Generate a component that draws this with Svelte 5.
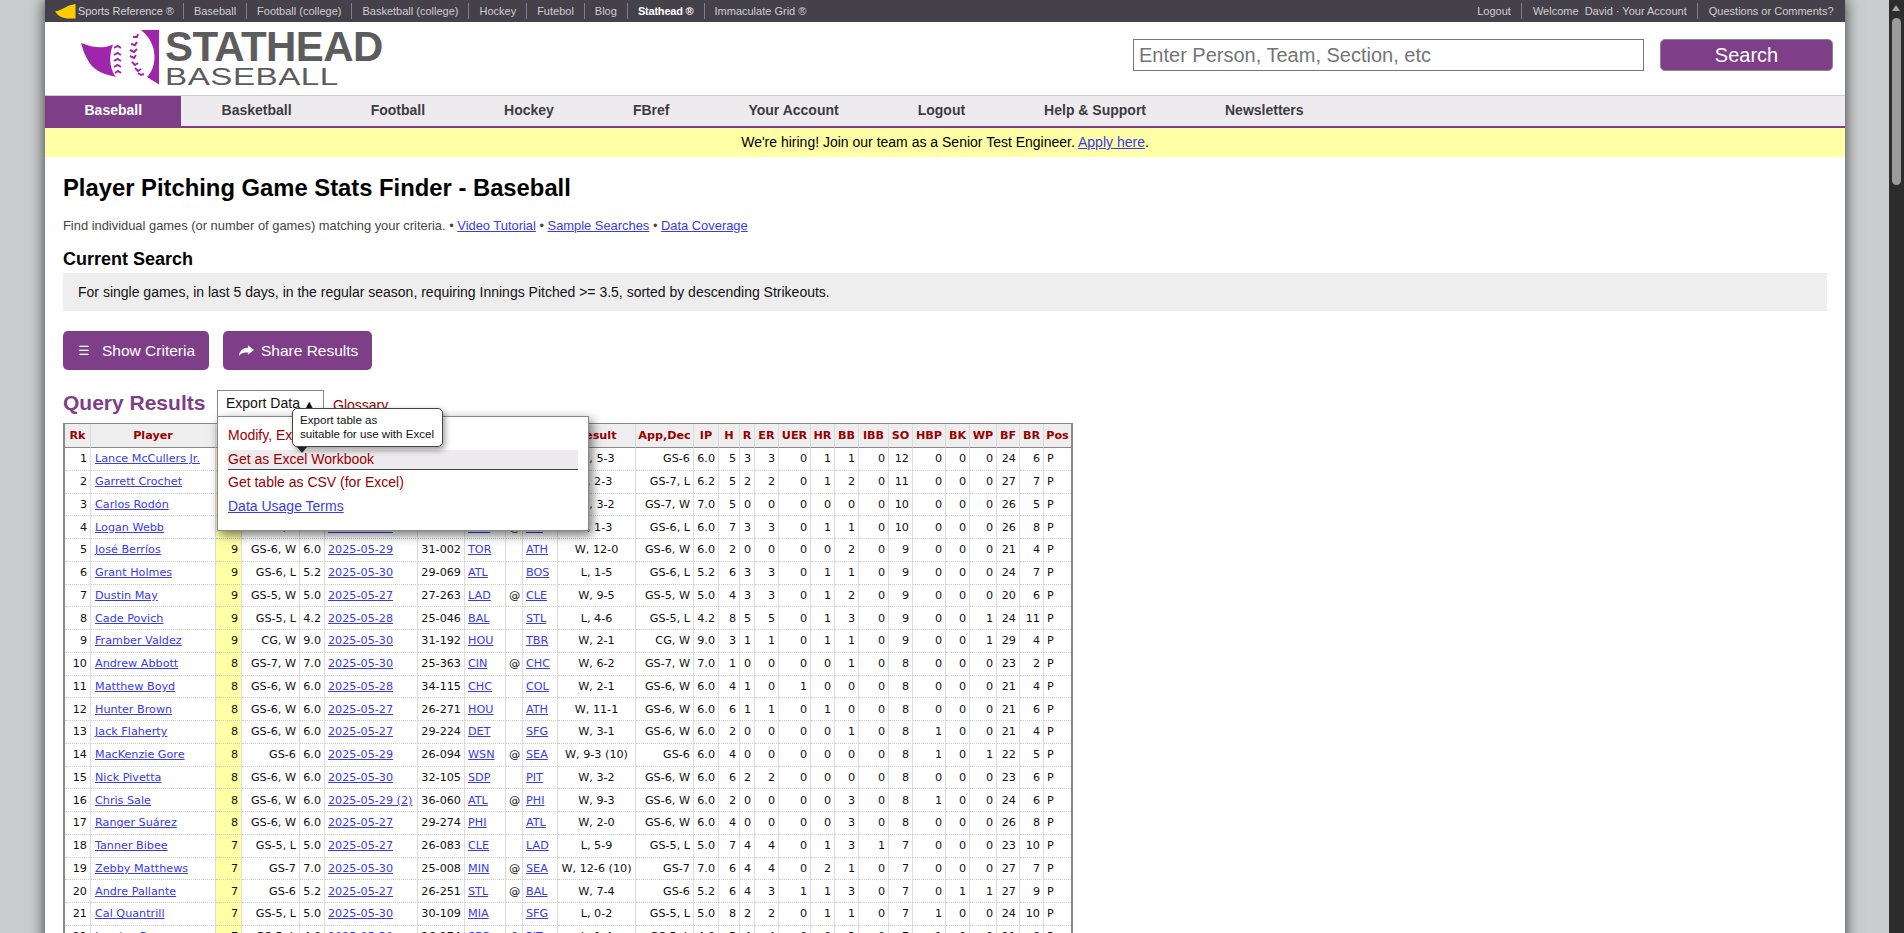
<script>
  const topLeft = ['Baseball', 'Football (college)', 'Basketball (college)', 'Hockey', 'Futebol', 'Blog'];
  const topRight = ['Logout', 'Welcome  David · Your Account', 'Questions or Comments?'];
  const nav = ['Baseball', 'Basketball', 'Football', 'Hockey', 'FBref', 'Your Account', 'Logout', 'Help & Support', 'Newsletters'];

  const heads = ['Rk', 'Player', 'SO', 'App,Dec', 'IP', 'Date', 'Age', 'Team', '', 'Opp', 'Result', 'App,Dec', 'IP', 'H', 'R', 'ER', 'UER', 'HR', 'BB', 'IBB', 'SO', 'HBP', 'BK', 'WP', 'BF', 'BR', 'Pos'];
  const widths = [26, 125, 26, 58, 25, 93, 47, 41, 17, 35, 78, 58, 25, 21, 15, 24, 32, 24, 24, 30, 24, 33, 24, 27, 23, 24, 27];

  // name, app, ip, date, age, team, at, opp, result, then H R ER UER HR BB IBB SO HBP BK WP BF BR
  const rows = [
    ['Lance McCullers Jr.', 'GS-6', '6.0', '2025-05-29', '31-229', 'HOU', '', 'CHW', 'W, 5-3', 5, 3, 3, 0, 1, 1, 0, 12, 0, 0, 0, 24, 6],
    ['Garrett Crochet', 'GS-7, L', '6.2', '2025-05-30', '25-362', 'BOS', '', 'ATL', 'L, 2-3', 5, 2, 2, 0, 1, 2, 0, 11, 0, 0, 0, 27, 7],
    ['Carlos Rodón', 'GS-7, W', '7.0', '2025-05-30', '32-170', 'NYY', '', 'COL', 'W, 3-2', 5, 0, 0, 0, 0, 0, 0, 10, 0, 0, 0, 26, 5],
    ['Logan Webb', 'GS-6, L', '6.0', '2025-05-30', '28-187', 'SFG', '@', 'PIT', 'L, 1-3', 7, 3, 3, 0, 1, 1, 0, 10, 0, 0, 0, 26, 8],
    ['José Berríos', 'GS-6, W', '6.0', '2025-05-29', '31-002', 'TOR', '', 'ATH', 'W, 12-0', 2, 0, 0, 0, 0, 2, 0, 9, 0, 0, 0, 21, 4],
    ['Grant Holmes', 'GS-6, L', '5.2', '2025-05-30', '29-069', 'ATL', '', 'BOS', 'L, 1-5', 6, 3, 3, 0, 1, 1, 0, 9, 0, 0, 0, 24, 7],
    ['Dustin May', 'GS-5, W', '5.0', '2025-05-27', '27-263', 'LAD', '@', 'CLE', 'W, 9-5', 4, 3, 3, 0, 1, 2, 0, 9, 0, 0, 0, 20, 6],
    ['Cade Povich', 'GS-5, L', '4.2', '2025-05-28', '25-046', 'BAL', '', 'STL', 'L, 4-6', 8, 5, 5, 0, 1, 3, 0, 9, 0, 0, 1, 24, 11],
    ['Framber Valdez', 'CG, W', '9.0', '2025-05-30', '31-192', 'HOU', '', 'TBR', 'W, 2-1', 3, 1, 1, 0, 1, 1, 0, 9, 0, 0, 1, 29, 4],
    ['Andrew Abbott', 'GS-7, W', '7.0', '2025-05-30', '25-363', 'CIN', '@', 'CHC', 'W, 6-2', 1, 0, 0, 0, 0, 1, 0, 8, 0, 0, 0, 23, 2],
    ['Matthew Boyd', 'GS-6, W', '6.0', '2025-05-28', '34-115', 'CHC', '', 'COL', 'W, 2-1', 4, 1, 0, 1, 0, 0, 0, 8, 0, 0, 0, 21, 4],
    ['Hunter Brown', 'GS-6, W', '6.0', '2025-05-27', '26-271', 'HOU', '', 'ATH', 'W, 11-1', 6, 1, 1, 0, 1, 0, 0, 8, 0, 0, 0, 21, 6],
    ['Jack Flaherty', 'GS-6, W', '6.0', '2025-05-27', '29-224', 'DET', '', 'SFG', 'W, 3-1', 2, 0, 0, 0, 0, 1, 0, 8, 1, 0, 0, 21, 4],
    ['MacKenzie Gore', 'GS-6', '6.0', '2025-05-29', '26-094', 'WSN', '@', 'SEA', 'W, 9-3 (10)', 4, 0, 0, 0, 0, 0, 0, 8, 1, 0, 1, 22, 5],
    ['Nick Pivetta', 'GS-6, W', '6.0', '2025-05-30', '32-105', 'SDP', '', 'PIT', 'W, 3-2', 6, 2, 2, 0, 0, 0, 0, 8, 0, 0, 0, 23, 6],
    ['Chris Sale', 'GS-6, W', '6.0', '2025-05-29 (2)', '36-060', 'ATL', '@', 'PHI', 'W, 9-3', 2, 0, 0, 0, 0, 3, 0, 8, 1, 0, 0, 24, 6],
    ['Ranger Suárez', 'GS-6, W', '6.0', '2025-05-27', '29-274', 'PHI', '', 'ATL', 'W, 2-0', 4, 0, 0, 0, 0, 3, 0, 8, 0, 0, 0, 26, 8],
    ['Tanner Bibee', 'GS-5, L', '5.0', '2025-05-27', '26-083', 'CLE', '', 'LAD', 'L, 5-9', 7, 4, 4, 0, 1, 3, 1, 7, 0, 0, 0, 23, 10],
    ['Zebby Matthews', 'GS-7', '7.0', '2025-05-30', '25-008', 'MIN', '@', 'SEA', 'W, 12-6 (10)', 6, 4, 4, 0, 2, 1, 0, 7, 0, 0, 0, 27, 7],
    ['Andre Pallante', 'GS-6', '5.2', '2025-05-27', '26-251', 'STL', '@', 'BAL', 'W, 7-4', 6, 4, 3, 1, 1, 3, 0, 7, 0, 1, 1, 27, 9],
    ['Cal Quantrill', 'GS-5, L', '5.0', '2025-05-30', '30-109', 'MIA', '', 'SFG', 'L, 0-2', 8, 2, 2, 0, 1, 1, 0, 7, 1, 0, 0, 24, 10],
    ['Landen Roupp', 'GS-5, L', '4.0', '2025-05-30', '26-274', 'SFG', '@', 'PIT', 'L, 1-4', 5, 4, 4, 0, 0, 3, 0, 7, 1, 0, 0, 21, 8]
  ];
</script>

<div class="wrap">
  <div class="topbar">
    <ul class="toplinks left">
      <li class="sr">
        <svg class="flag" viewBox="0 0 21 15" width="21" height="15">
          <path d="M0 7.500 C4 7 9 4 14 1.500 L20.500 0 V14.500 H14 C8 14.500 3 12 0 7.500 Z" fill="#fc0" />
        </svg>
        Sports Reference ®
      </li>
      {#each topLeft as t}
        <li>{t}</li>
      {/each}
      <li class="sh">Stathead ®</li>
      <li class="last">Immaculate Grid ®</li>
    </ul>
    <ul class="toplinks">
      {#each topRight as t, i}
        <li class:last={i === topRight.length - 1}>{t}</li>
      {/each}
    </ul>
  </div>

  <header class="head">
    <div class="logo">
      <svg viewBox="0 0 90 60" width="90" height="60">
        <g transform="translate(-11 -8)">
          <path d="M11 21 C24 26 33 27 43 22.500 C39 33 39 44 45 54 L47.500 55 C36 53 25 50 19 40 C15 34 13 28 11 21 Z" fill="#9f25ad" />
          <path d="M71 8 H89 V62.500 L77 55 C86 47 90 23 71 8 Z" fill="#9f25ad" />
          <path d="M44 26 l3.500 -2 l3.500 2 M44 33 l3.500 -2 l3.500 2 M44 39 l3.500 -2 l3.500 2 M44 45 l3.500 -2 l3.500 2 M45 51 l3 -2 l3 2" fill="none" stroke="#9f25ad" stroke-width="2" />
          <path d="M63 15 l4 0 l1 -3 M61 22 l4 1 l2 -3 M60 28 l4 2 l3 -3 M60 34 l4 2 l2 -3 M62 40 l3 3 l3 -2 M65 46 l3 3 l3 -2 M68 51 l3 2 l3 -1" fill="none" stroke="#9f25ad" stroke-width="2" />
        </g>
      </svg>
      <div class="wordmark">
        <span class="w1">STATHEAD</span>
        <span class="w2">BASEBALL</span>
      </div>
    </div>
    <form class="search" onsubmit={e => e.preventDefault()}>
      <input type="text" placeholder="Enter Person, Team, Section, etc" />
      <button>Search</button>
    </form>
  </header>

  <nav class="nav">
    {#each nav as n, i}
      <span class="navitem" class:active={i === 0}>{n}</span>
    {/each}
  </nav>

  <div class="hiring">We're hiring! Join our team as a Senior Test Engineer. <a href="#top">Apply here</a>.</div>

  <main class="content">
    <h1>Player Pitching Game Stats Finder - Baseball</h1>
    <p class="desc">Find individual games (or number of games) matching your criteria. • <a href="#top">Video Tutorial</a> • <a href="#top">Sample Searches</a> • <a href="#top">Data Coverage</a></p>

    <h2>Current Search</h2>
    <div class="current">For single games, in last 5 days, in the regular season, requiring Innings Pitched &gt;= 3.5, sorted by descending Strikeouts.</div>

    <div class="actions">
      <button class="act crit"><span class="bars">☰</span>Show Criteria</button>
      <button class="act share">
        <svg class="arrow" viewBox="0 0 16 11" width="15" height="11">
          <path d="M9.500 0 L16 5 L9.500 10 V7.500 C6 7.500 2.500 8 0 11 C0.500 6 4 2.500 9.500 2.500 Z" fill="#fff" />
        </svg>
        Share Results
      </button>
    </div>

    <div class="results-head">
      <h2 class="qr">Query Results</h2>
      <div class="export">
        <span class="export-btn">Export Data <i>▲</i></span>
        <div class="menu">
          <span class="mi">Modify, Export &amp; Share Table</span>
          <span class="mi hover">Get as Excel Workbook</span>
          <span class="mi">Get table as CSV (for Excel)</span>
          <a class="mi" href="#top">Data Usage Terms</a>
        </div>
        <div class="tip">Export table as<br />suitable for use with Excel</div>
      </div>
      <span class="glossary">Glossary</span>
    </div>

    <table class="stats">
      <colgroup>
        {#each widths as w}
          <col style="width:{w}px" />
        {/each}
      </colgroup>
      <thead>
        <tr>
          {#each heads as h}
            <th>{h}</th>
          {/each}
        </tr>
      </thead>
      <tbody>
        {#each rows as r, i}
          <tr>
            <td class="r">{i + 1}</td>
            <td class="name"><a href="#top">{r[0]}</a></td>
            <td class="r hl">{r[16]}</td>
            <td class="r">{r[1]}</td>
            <td class="r">{r[2]}</td>
            <td><a href="#top">{r[3]}</a></td>
            <td class="r">{r[4]}</td>
            <td><a href="#top">{r[5]}</a></td>
            <td class="c">{r[6]}</td>
            <td><a href="#top">{r[7]}</a></td>
            <td class="c">{r[8]}</td>
            <td class="r">{r[1]}</td>
            <td class="r">{r[2]}</td>
            {#each r.slice(9) as v}
              <td class="r">{v}</td>
            {/each}
            <td>P</td>
          </tr>
        {/each}
      </tbody>
    </table>
  </main>
</div>

<aside class="scrollbar">
  <i class="up"></i>
  <i class="thumb"></i>
</aside>

<style>
  :global(html), :global(body) {
    height: 100%;
    overflow: hidden;
  }
  :global(body) {
    background: #cbcccd;
    font-family: "Liberation Sans", Arial, sans-serif;
  }

  .wrap {
    width: 1800px;
    margin-left: 45px;
    background: #fff;
    box-shadow: 0 0 14px rgba(0, 0, 0, 0.75);
    min-height: 100vh;
  }

  /* top strip */
  .topbar {
    height: 22px;
    background: #45414a;
    display: flex;
    justify-content: space-between;
    padding: 0 1px 0 10px;
    font-size: 11px;
    color: #cfcdd2;
  }
  .toplinks {
    display: flex;
    align-items: center;
    list-style: none;
    margin: 0;
    padding: 0;
  }
  .toplinks li {
    padding: 0 10.5px;
    line-height: 16px;
    border-right: 1px solid #827e86;
    white-space: pre;
  }
  .toplinks.left li { padding: 0 10px; }
  .toplinks li.last { border-right: 0; }
  .toplinks .sr { display: flex; align-items: center; gap: 0; color: #d6d4d8; }
  .toplinks.left .sr { padding-left: 0; padding-right: 9px; letter-spacing: -0.05px; }
  .toplinks .sh { color: #fff; font-weight: bold; letter-spacing: -0.2px; }
  .flag { display: block; margin-right: -1px; }

  /* logo + search */
  .head {
    height: 73px;
    display: flex;
    justify-content: space-between;
    align-items: flex-start;
    padding: 0 12px 0 36px;
  }
  .logo {
    display: flex;
    padding-top: 8px;
  }
  .wordmark {
    display: flex;
    flex-direction: column;
    margin-left: -6px;
    color: #5c5c5c;
  }
  .w1 {
    font-size: 42px;
    font-weight: bold;
    line-height: 34px;
    letter-spacing: -0.6px;
  }
  .w2 {
    font-size: 24px;
    line-height: 22px;
    margin-top: 2px;
    letter-spacing: 0.4px;
    transform: scaleX(1.38);
    transform-origin: left center;
  }
  .search {
    display: flex;
    gap: 16px;
    padding-top: 17px;
  }
  .search input {
    width: 511px;
    height: 32px;
    box-sizing: border-box;
    border: 1px solid #777;
    padding: 0 5px;
    font: 20px "Liberation Sans", Arial, sans-serif;
  }
  .search input::placeholder { color: #757575; opacity: 1; }
  .search button {
    width: 173px;
    height: 32px;
    background: #7f3e88;
    color: #fff;
    border: 1px solid #8d8391;
    border-radius: 5px;
    font: 20px "Liberation Sans", Arial, sans-serif;
  }

  /* main nav */
  .nav {
    display: flex;
    height: 30px;
    background: #edebee;
    border-top: 1px solid #ccc;
    border-bottom: 2px solid #7f3e88;
  }
  .navitem {
    padding: 0 39.5px;
    font-size: 14px;
    font-weight: bold;
    line-height: 29px;
    color: #3f3b42;
  }
  .navitem.active {
    padding-right: 39px;
    margin-right: 1px;
    background: #7f3e88;
    color: #fff;
  }

  .hiring {
    height: 29px;
    line-height: 28px;
    background: #ffffa5;
    font-size: 14px;
    text-align: center;
    color: #000;
  }

  a { color: #3a3aee; }

  .content { padding: 0 18px; }

  h1 {
    margin: 0;
    padding-top: 16px;
    font-size: 23.8px;
    line-height: 30px;
    color: #000;
  }
  .desc {
    margin: 0;
    padding-top: 15px;
    font-size: 12.9px;
    line-height: 16px;
    color: #444;
  }
  h2 {
    margin: 0;
    padding-top: 15px;
    font-size: 18px;
    line-height: 20px;
    color: #000;
  }
  .current {
    margin-top: 4px;
    width: 1764px;
    box-sizing: border-box;
    height: 38px;
    line-height: 38px;
    padding-left: 15px;
    background: #eee;
    font-size: 14px;
    color: #111;
  }
  .actions {
    display: flex;
    gap: 14px;
    margin-top: 20px;
  }
  .act {
    height: 39px;
    border: 0;
    border-radius: 5px;
    background: #7f3e88;
    color: #fff;
    font: 15.5px "Liberation Sans", Arial, sans-serif;
    display: flex;
    align-items: center;
    padding: 0 0 0 15px;
  }
  .crit { width: 146px; }
  .share { width: 149px; padding-left: 16px; }
  .bars { margin-right: 12px; font-size: 13px; }
  .arrow { margin-right: 7px; }

  .results-head {
    display: flex;
    align-items: flex-start;
    margin-top: 20px;
    height: 33px;
  }
  .qr {
    padding: 0;
    width: 154px;
    font-size: 21px;
    line-height: 26px;
    color: #7f3e88;
  }
  .export { position: relative; }
  .export-btn {
    display: block;
    box-sizing: border-box;
    width: 107px;
    height: 27px;
    border: 1px solid #888;
    border-bottom: 0;
    padding-left: 8px;
    font-size: 14px;
    line-height: 25px;
    color: #111;
  }
  .export-btn i { font-style: normal; font-size: 11px; }
  .menu {
    position: absolute;
    z-index: 3;
    left: 0;
    top: 26px;
    width: 372px;
    height: 115px;
    box-sizing: border-box;
    border: 1px solid #888;
    background: #fff;
    box-shadow: 3px 4px 10px rgba(0, 0, 0, 0.55);
    padding: 9px 10px 0;
    display: flex;
    flex-direction: column;
    font-size: 14px;
    color: #990000;
  }
  .mi {
    display: block;
    height: 19px;
    line-height: 19px;
    margin-bottom: 5px;
  }
  .mi.hover {
    background: #edebee;
    border-bottom: 1px solid #45414a;
    margin-bottom: 3px;
  }
  .menu a { color: #3a3aee; }
  .tip {
    position: absolute;
    z-index: 4;
    left: 75px;
    top: 18px;
    width: 151px;
    height: 39px;
    box-sizing: border-box;
    padding: 4px 7px;
    background: #fff;
    border: 1px solid #444;
    border-radius: 5px;
    box-shadow: 2px 3px 6px rgba(0, 0, 0, 0.4);
    font-size: 11.6px;
    line-height: 14px;
    color: #111;
    white-space: nowrap;
  }
  .tip::after {
    content: "";
    position: absolute;
    left: 4px;
    top: 38px;
    border: 5px solid transparent;
    border-top: 6px solid #222;
    border-bottom: 0;
  }
  .glossary {
    margin-left: 9px;
    padding-top: 6px;
    font-size: 14px;
    line-height: 18px;
    color: #990000;
  }

  /* stat table */
  .stats {
    table-layout: fixed;
    border-collapse: separate;
    border-spacing: 0;
    width: 1010px;
    border: solid #888;
    border-width: 1px 2px 0;
    font: 11.2px "DejaVu Sans", Verdana, sans-serif;
    color: #111;
  }
  .stats th {
    height: 23px;
    padding: 0;
    background: #eee;
    color: #990000;
    font-weight: bold;
    text-align: center;
    white-space: nowrap;
    overflow: visible;
    border-right: 1px solid #ddd;
    border-bottom: 1px solid #888;
  }
  .stats td {
    height: 22.75px;
    box-sizing: border-box;
    padding: 0 3px;
    white-space: nowrap;
    border-right: 1px solid #ddd;
    border-bottom: 1px dotted #ccc;
  }
  .stats tr > :last-child { border-right: 0; }
  .stats td.r { text-align: right; }
  .stats td.c { text-align: center; }
  .stats td.name { padding-left: 4px; }
  .stats td.hl { background: #ffffa5; }

  /* page scrollbar, drawn since the shot has none of its own */
  .scrollbar {
    position: fixed;
    top: 0;
    right: 0;
    bottom: 0;
    width: 15px;
    background: #2c2c2c;
  }
  .up {
    position: absolute;
    top: 5px;
    left: 3px;
    border: 4.500px solid transparent;
    border-top: 0;
    border-bottom: 6px solid #a8a8a8;
  }
  .thumb {
    position: absolute;
    top: 18px;
    left: 3px;
    width: 9px;
    height: 167px;
    border-radius: 5px;
    background: #9b9b9b;
  }
</style>
